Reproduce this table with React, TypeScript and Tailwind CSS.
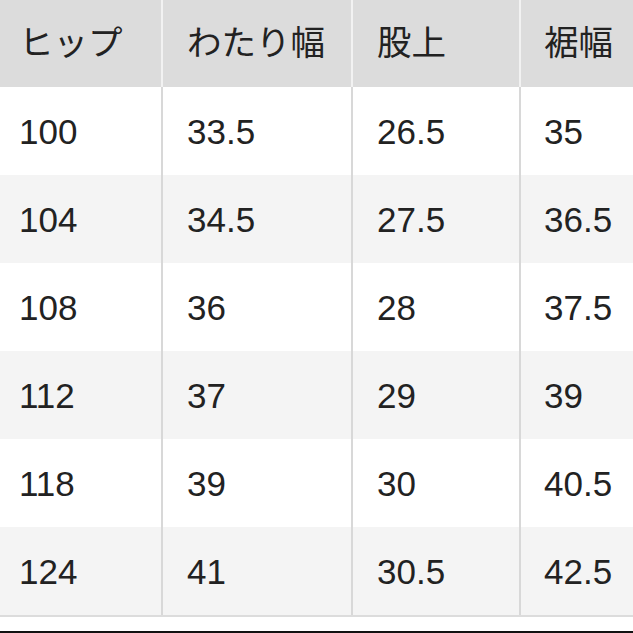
const headers = ["ヒップ", "わたり幅", "股上", "裾幅"];

const rows = [
  ["100", "33.5", "26.5", "35"],
  ["104", "34.5", "27.5", "36.5"],
  ["108", "36", "28", "37.5"],
  ["112", "37", "29", "39"],
  ["118", "39", "30", "40.5"],
  ["124", "41", "30.5", "42.5"],
];

const cols = "grid grid-cols-[161px_188px_166px_1fr] gap-x-[2px]";
const pads = ["pl-[19px]", "pl-[24px]", "pl-[24px]", "pl-[23px]"];

export default function App() {
  return (
    <div
      className="w-[633px] h-[633px] bg-white text-[#222] overflow-hidden flex flex-col"
      style={{ fontFamily: '"Liberation Sans", "Noto Sans CJK JP", sans-serif' }}
    >
      {/* header */}
      <div className={`${cols} bg-[#f2f2f2]`}>
        {headers.map((h, i) => (
          <div
            key={i}
            className={`h-[87px] bg-[#dcdcdc] flex items-center text-[34.5px] leading-none ${pads[i]}`}
          >
            {h}
          </div>
        ))}
      </div>

      {/* body */}
      <div className={`${cols} bg-[#d8d8d8]`}>
        {rows.map((r, ri) =>
          r.map((c, ci) => (
            <div
              key={`${ri}-${ci}`}
              className={`h-[88px] flex items-center text-[35px] leading-none ${pads[ci]} ${
                ri % 2 === 1 ? "bg-[#f4f4f4]" : "bg-white"
              }`}
            >
              {c}
            </div>
          ))
        )}
      </div>

      <div className="h-[2px] bg-[#dcdcdc]" />
      <div className="flex-1" />
      <div className="h-[2px] bg-[#111]" />
    </div>
  );
}
